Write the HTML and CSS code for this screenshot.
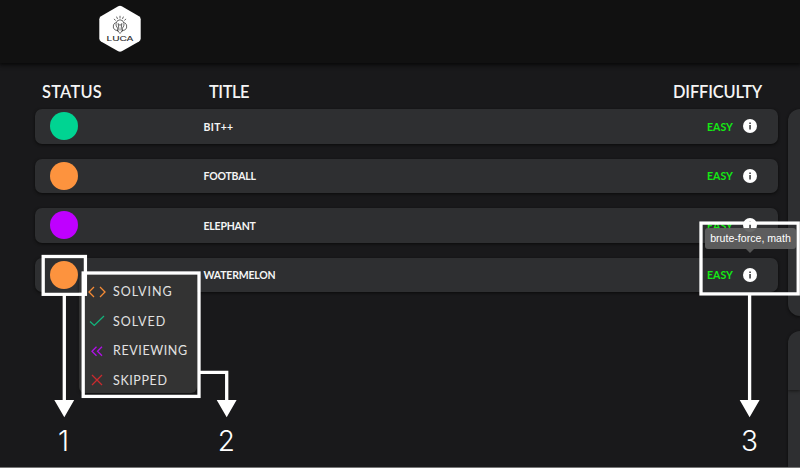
FILE: index.html
```html
<!DOCTYPE html>
<html lang="en">
<head>
<meta charset="utf-8">
<title>Problems</title>
<link rel="stylesheet" href="styles.css">
</head>
<body>
<header class="topbar">
  <svg class="logo" width="44" height="48" viewBox="0 0 44 48">
    <path d="M20.2 1.2Q22 .3 23.8 1.2L41 11.2Q42.7 12.2 42.7 14.2V33.6Q42.7 35.6 41 36.6L23.8 46.3Q22 47.2 20.2 46.3L3 36.6Q1.3 35.6 1.3 33.6V14.2Q1.3 12.2 3 11.2Z" fill="#fff"/>
    <g fill="none" stroke="#333" stroke-width=".75" stroke-linecap="round">
      <path d="M19.6 26V23.2Q17.6 21 18 18.4Q18.8 14.8 22 14.8T26 18.4Q26.4 21 24.4 23.2V26M21 25L20.2 18.5 22 20.5 23.8 18.5 23 25M17.2 17.6Q14.4 19.6 15.4 23Q16.7 25.8 20 25.6Q20.3 27.3 22 28.4Q23.7 27.3 24 25.6Q27.3 25.8 28.6 23Q29.6 19.6 26.8 17.6"/>
      <path d="M22 11.2V13M18.7 12L19.4 13.6M25.3 12L24.6 13.6M16.2 14.2L17.4 15.2M27.8 14.2L26.6 15.2"/>
    </g>
    <text class="logo-text" x="8.5" y="35.8" textLength="27" lengthAdjust="spacingAndGlyphs">LUCA</text>
  </svg>
</header>
<div class="layout">
  <main class="problems">
    <div class="headings"><span class="h-status">STATUS</span><span class="h-title">TITLE</span><span class="h-diff">DIFFICULTY</span></div>
    <div class="row"><i class="dot solved"></i><span class="name short">BIT++</span><span class="easy">EASY</span><svg class="info" viewBox="0 0 14 14"><circle cx="7" cy="7" r="7"/><path d="M6.3 3.5h1.5v1.4H6.3zM6.3 6h1.5v4.5H6.3z"/></svg></div>
    <div class="row"><i class="dot solving"></i><span class="name">FOOTBALL</span><span class="easy">EASY</span><svg class="info" viewBox="0 0 14 14"><circle cx="7" cy="7" r="7"/><path d="M6.3 3.5h1.5v1.4H6.3zM6.3 6h1.5v4.5H6.3z"/></svg></div>
    <div class="row"><i class="dot reviewing"></i><span class="name">ELEPHANT</span><span class="easy">EASY</span><svg class="info" viewBox="0 0 14 14"><circle cx="7" cy="7" r="7"/><path d="M6.3 3.5h1.5v1.4H6.3zM6.3 6h1.5v4.5H6.3z"/></svg></div>
    <div class="row"><i class="dot solving"></i><span class="name">WATERMELON</span><span class="easy">EASY</span><svg class="info" viewBox="0 0 14 14"><circle cx="7" cy="7" r="7"/><path d="M6.3 3.5h1.5v1.4H6.3zM6.3 6h1.5v4.5H6.3z"/></svg></div>
  </main>
  <aside class="side"><div class="panel"></div><div class="panel lower"><div class="panel-head"></div></div></aside>
</div>
<div class="menu">
  <div class="item"><svg width="18" height="16" viewBox="0 0 18 16" stroke="#f68b35"><path d="M6 3L1 8l5 5M12 3l5 5-5 5"/></svg><span class="wide">SOLVING</span></div>
  <div class="item"><svg width="18" height="16" viewBox="0 0 18 16" stroke="#12b57c"><path d="M2 8.4l4.3 4L16 3"/></svg><span class="wide">SOLVED</span></div>
  <div class="item"><svg width="18" height="16" viewBox="0 0 18 16" stroke="#b010e8"><path d="M8.5 3.8L4 8.3l4.5 4.5M14 3.8L9.5 8.3l4.5 4.5"/></svg><span>REVIEWING</span></div>
  <div class="item"><svg width="18" height="16" viewBox="0 0 18 16" stroke="#c92a2e"><path d="M4 3l10 10M14 3L4 13"/></svg><span>SKIPPED</span></div>
</div>
<div class="tooltip">brute-force, math</div>
<svg class="annotations" width="800" height="468" viewBox="0 0 800 468">
  <g fill="none" stroke="#fff" stroke-width="3.3">
    <rect x="43.2" y="256.5" width="42.2" height="37.8"/>
    <rect x="83.2" y="273" width="115.8" height="123.4"/>
    <rect x="701" y="223.1" width="97.2" height="70.8"/>
    <path d="M64.3 295V402M200 372.3H226.7V402M749.6 295V402"/>
  </g>
  <path d="M54.3 400H74.2L64.3 417.2ZM216.7 400H236.6L226.7 417.2ZM739.7 400H759.6L749.6 417.2Z" fill="#fff"/>
  <g class="numbers"><text x="63.5" y="451.3">1</text><text x="226.3" y="451.3">2</text><text x="749.5" y="451.3">3</text></g>
</svg>
</body>
</html>
```
FILE: styles.css
```css
* { box-sizing: border-box; }
body {
  margin: 0;
  width: 800px;
  height: 468px;
  overflow: hidden;
  position: relative;
  background: #19191b;
  color: #f5f5f5;
  font-family: Lato, "Open Sans", sans-serif;
  border-bottom: 1px solid #777;
}
.topbar {
  height: 63px;
  padding: 5px 0 0 98px;
  background: #111;
  box-shadow: 0 1px 4px 1px #080808;
}
.logo { display: block; }
.logo-text { font: 6.3px Inter, sans-serif; fill: #222; stroke: #222; stroke-width: .1px; }
.layout { display: flex; gap: 10px; padding-left: 35px; height: 404px; overflow: hidden; margin-top: 0; clip-path: inset(6px 0 0 0); }
.problems { width: 743px; flex: none; }
.headings {
  display: flex;
  height: 46px;
  padding-top: 18px;
  font: 600 16.4px/21px Lato, sans-serif;
}
.h-status { width: 167px; padding-left: 7px; letter-spacing: .25px; }
.h-title { flex: 1; padding-left: 7px; letter-spacing: -.4px; }
.h-diff { width: 105px; letter-spacing: -.15px; }
.row {
  display: flex;
  align-items: center;
  height: 34.5px;
  margin-bottom: 15px;
  padding: 0 20.5px 0 14.5px;
  border-radius: 7px;
  background: #2e2f31;
  box-shadow: 0 1px 3px #0b0b0b;
}
.dot { width: 28px; height: 28px; border-radius: 50%; }
.solved { background: #00d492; }
.solving { background: #fd933e; }
.reviewing { background: #bf00ff; }
.name { flex: 1; padding-left: 126px; padding-top: 1px; font-size: 10.5px; font-weight: 700; letter-spacing: -.2px; }
.short { letter-spacing: .3px; }
.easy { width: 36px; padding-top: 1px; color: #14ea14; font-size: 10.5px; font-weight: 700; letter-spacing: .05px; }
.info { width: 14px; height: 14px; fill: #fff; margin-right: .5px; }
.info path { fill: #2e2f31; }
.side { flex: 1; min-width: 0; padding-top: 46px; }
.panel { height: 207px; border-radius: 12px 0 0 12px; background: #2e2f31; box-shadow: 0 1px 3px #0b0b0b; }
.lower { height: 136.5px; margin-top: 14.5px; border-bottom-left-radius: 0; overflow: hidden; }
.panel-head { height: 59px; box-shadow: 0 1px 3px #171717; }
.menu {
  position: absolute;
  left: 79px;
  top: 273px;
  width: 117.5px;
  height: 120px;
  padding: 3.5px 0 0 9px;
  border-radius: 6px;
  background: #333;
  box-shadow: 0 1px 3px #151515;
}
.item { display: flex; align-items: center; gap: 7px; height: 29.5px; padding-top: .5px; color: #e2e2e2; font-size: 12.5px; letter-spacing: .6px; }
.wide { letter-spacing: 1px; }
.item svg { flex: none; fill: none; stroke-width: 1.3; }
.tooltip {
  position: absolute;
  left: 705px;
  top: 228px;
  width: 91px;
  height: 21px;
  border-radius: 3px;
  background: rgba(97, 97, 97, .94);
  color: #fff;
  font: 10.6px/21px "Liberation Sans", sans-serif;
  text-align: center;
  white-space: nowrap;
}
.tooltip::after {
  content: "";
  position: absolute;
  left: 41px;
  top: 21px;
  border: 4px solid transparent;
  border-top-color: #555;
  border-bottom: 0;
}
.annotations { position: absolute; left: 0; top: 0; }
.numbers { font: 300 28px Inter, sans-serif; fill: #fff; text-anchor: middle; }
```
